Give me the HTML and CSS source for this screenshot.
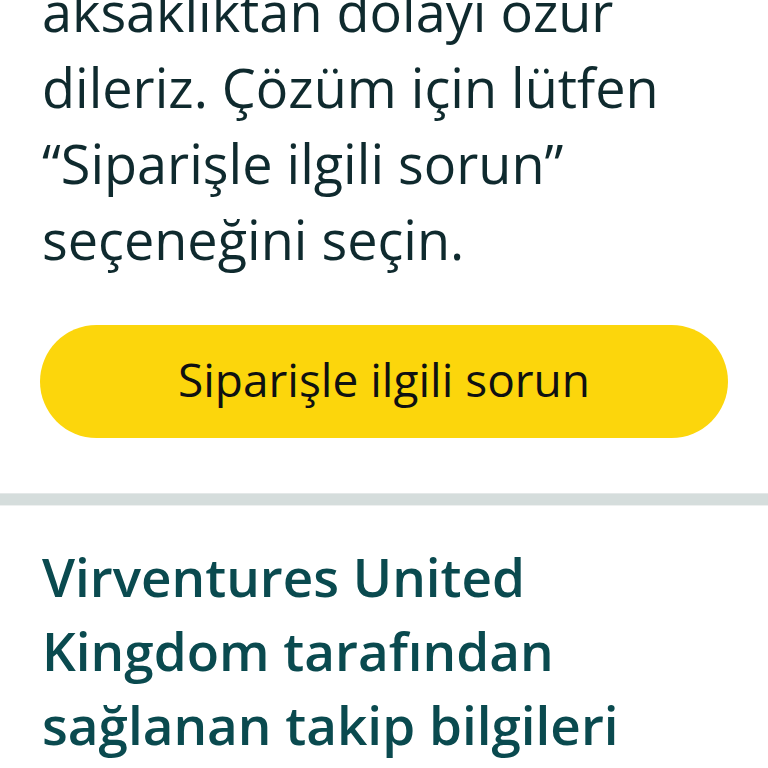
FILE: index.html
```html
<!DOCTYPE html>
<html lang="tr">
<head>
<meta charset="utf-8">
<link rel="stylesheet" href="styles.css">
</head>
<body>
<section class="notice">
  <p class="notice-text">aksaklıktan dolayı özür dileriz. Çözüm için lütfen “Siparişle ilgili sorun” seçeneğini seçin.</p>
  <button class="action-btn" type="button">Siparişle ilgili sorun</button>
</section>
<div class="divider"></div>
<section class="tracking">
  <h2 class="tracking-title">Virventures United Kingdom tarafından sağlanan takip bilgileri</h2>
</section>
</body>
</html>
```
FILE: styles.css
```css
html, body {
  margin: 0;
  padding: 0;
  background: #ffffff;
}
body {
  font-family: "Open Sans", "Noto Sans", "Liberation Sans", sans-serif;
  font-variant-ligatures: none;
  overflow: hidden;
}
.notice {
  padding: 0 40px 0 42px;
}
.notice-text {
  margin: -27px 0 0 0;
  font-size: 54px;
  line-height: 76px;
  color: #0f2a2e;
  width: 670px;
}
.action-btn {
  display: flex;
  align-items: center;
  justify-content: center;
  box-sizing: border-box;
  width: 688px;
  height: 113px;
  margin: 48px 0 0 -2px;
  border: none;
  border-radius: 57px;
  background: #fcd60c;
  color: #0f1111;
  font-family: inherit;
  font-variant-ligatures: none;
  font-size: 46px;
  padding: 0 0 6px 0;
}
.divider {
  margin-top: 55px;
  height: 11px;
  background: #d5dddc;
  border-top: 1px solid #e4e8e8;
  border-bottom: 1px solid #eef0f0;
}
.tracking {
  padding: 0 40px 0 42px;
}
.tracking-title {
  margin: 34px 0 0 0;
  font-size: 53px;
  line-height: 74px;
  font-weight: 600;
  color: #0a4a4f;
}
```
